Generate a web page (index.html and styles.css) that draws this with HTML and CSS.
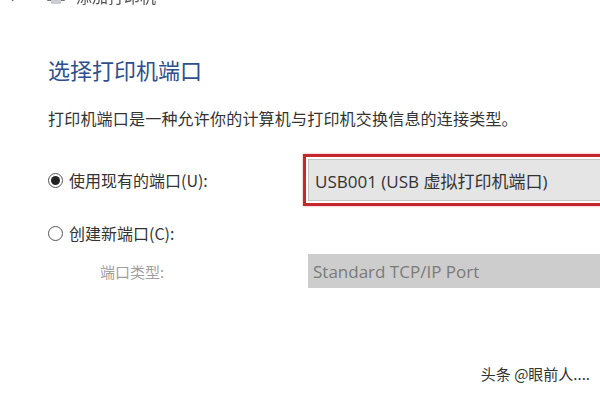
FILE: index.html
```html
<!DOCTYPE html>
<html lang="zh-CN">
<head>
  <meta charset="UTF-8">
  <title>添加打印机</title>
  <link rel="stylesheet" href="styles.css">
</head>
<body>
  <div class="window">
    <!-- 顶部标题栏（被截掉一半） -->
    <div class="topbar">
      <span class="back">&#8592;</span>
      <svg class="printer" width="20" height="18" viewBox="0 0 20 18">
        <rect x="5" y="1" width="10" height="5" fill="#9aa0a6" />
        <rect x="1" y="6" width="18" height="8" rx="1" fill="#6d737a" />
        <rect x="5" y="11" width="10" height="6" fill="#c9cdd2" />
      </svg>
      <span class="wintitle">添加打印机</span>
    </div>

    <div class="content">
      <h1>选择打印机端口</h1>
      <p class="desc">打印机端口是一种允许你的计算机与打印机交换信息的连接类型。</p>

      <div class="rows">
        <label class="opt">
          <span class="radio checked"></span>
          使用现有的端口(U):
        </label>
        <div class="highlight">
          <div class="select">USB001 (USB 虚拟打印机端口)</div>
        </div>

        <label class="opt opt-new">
          <span class="radio"></span>
          创建新端口(C):
        </label>
        <div></div>

        <div class="sublabel">端口类型:</div>
        <div class="select disabled">Standard TCP/IP Port</div>
      </div>
    </div>

    <div class="watermark">头条 @眼前人....</div>
  </div>
</body>
</html>
```

FILE: styles.css
```css
* {
  margin: 0;
  padding: 0;
  box-sizing: border-box;
}
body {
  width: 600px;
  height: 400px;
  overflow: hidden;
  background-color: #ffffff;
  font-family: "Segoe UI", "Open Sans", "Noto Sans CJK SC", sans-serif;
  color: #333333;
}
.window {
  position: relative;
  height: 400px;
}
.topbar {
  display: flex;
  align-items: center;
  height: 24px;
  margin-top: -16px;
  padding-left: 8px;
  color: #555555;
  filter: blur(0.6px);
}
.back {
  font-size: 16px;
  width: 38px;
}
.printer {
  margin-right: 10px;
}
.wintitle {
  font-size: 16px;
  font-family: "Noto Sans CJK SC", sans-serif;
}
.content {
  padding: 0 0 0 48px;
}
h1 {
  margin-top: 45px;
  font-size: 22px;
  font-weight: normal;
  color: #2f4f8c;
  font-family: "Noto Sans CJK SC", sans-serif;
}
.desc {
  margin-top: 21px;
  font-size: 16px;
  letter-spacing: 0.2px;
  color: #333333;
  font-family: "Noto Sans CJK SC", sans-serif;
}
.rows {
  display: grid;
  grid-template-columns: 255px 1fr;
  align-items: center;
  margin-top: 24px;
}
.opt {
  display: flex;
  align-items: center;
  gap: 6px;
  font-size: 16px;
  color: #333333;
  font-family: "Noto Sans CJK SC", sans-serif;
}
.opt-new {
  height: 48px;
  padding-top: 6px;
}
.radio {
  width: 15px;
  height: 15px;
  border: 1px solid #555555;
  border-radius: 50%;
  display: inline-flex;
  align-items: center;
  justify-content: center;
}
.radio.checked::after {
  content: "";
  width: 9px;
  height: 9px;
  border-radius: 50%;
  background-color: #222222;
}
.highlight {
  width: 320px;
  padding: 2px;
  border: 3px solid #c5272d;
  box-shadow: 0 0 2px rgba(197, 39, 45, 0.5);
}
.select {
  height: 42px;
  display: flex;
  align-items: center;
  padding-left: 6px;
  font-size: 17px;
  color: #333333;
  background-color: #e5e5e5;
  border: 1px solid #c4c4c4;
  border-right: none;
  font-family: "Open Sans", "Noto Sans CJK SC", sans-serif;
}
.sublabel {
  padding-left: 52px;
  font-size: 15px;
  color: #a0a0a0;
  font-family: "Noto Sans CJK SC", sans-serif;
}
.select.disabled {
  height: 34px;
  margin-left: 5px;
  margin-right: -10px;
  color: #7a7a7a;
  background-color: #cdcdcd;
  border: none;
  padding-left: 5px;
}
.watermark {
  position: absolute;
  right: 10px;
  bottom: 0;
  font-size: 15px;
  color: #333333;
  font-family: "Noto Sans CJK SC", sans-serif;
}
```
